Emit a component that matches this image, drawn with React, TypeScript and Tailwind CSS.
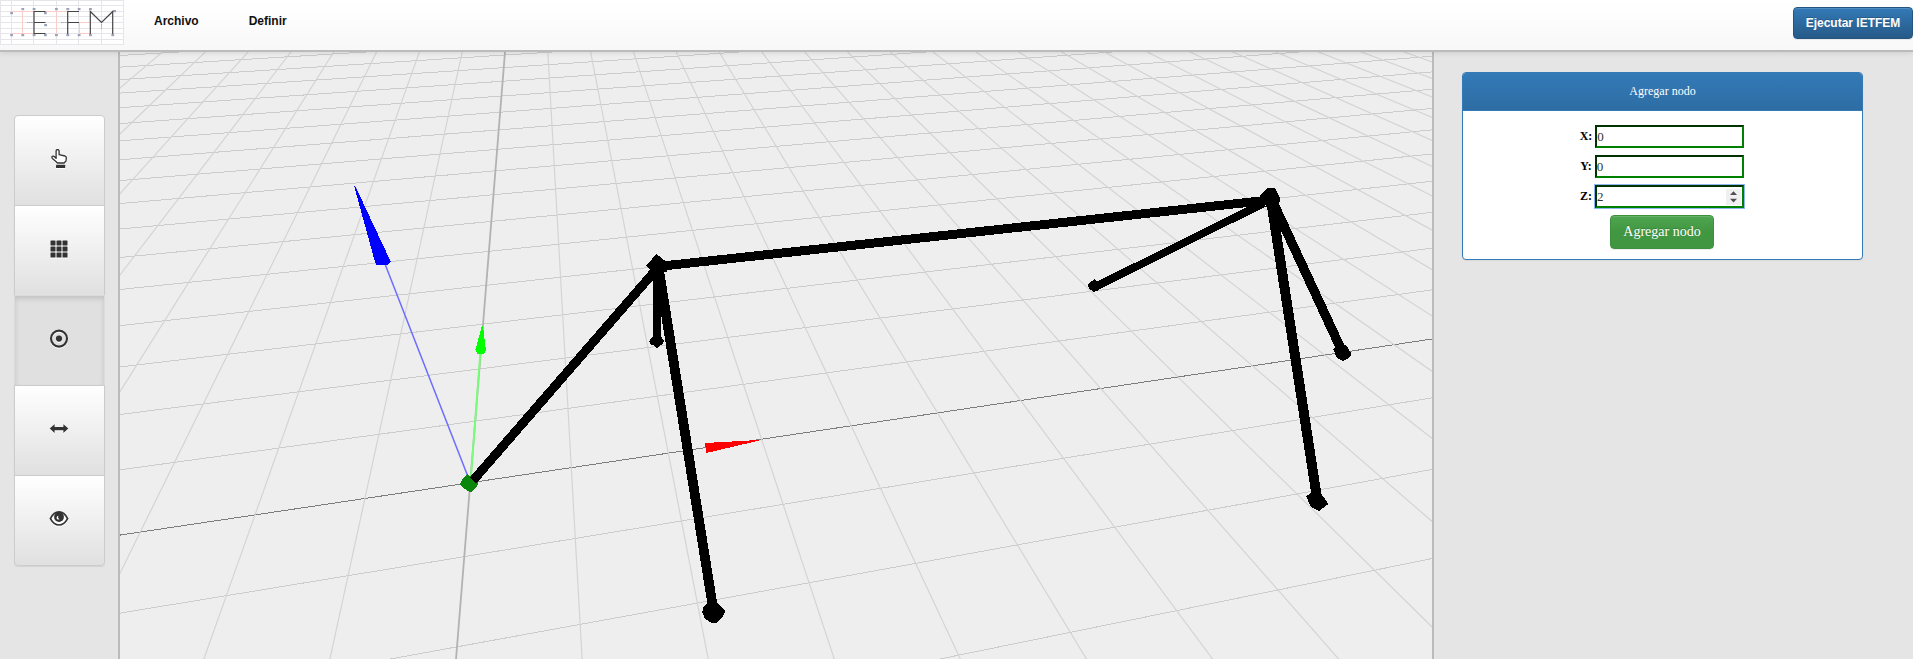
import type { ReactNode } from "react";

// Perspective of the ground grid: a level horizon and two vanishing points.
const HORIZON = -260.2;
const VX = 530.2;
const UX = 5442;

const depthX = (i: number, y: number) => VX + (y - HORIZON) * (-0.0807 + 0.13717 * i);

const depthLines = Array.from({ length: 35 }, (_, k) => k - 12);
const crossLines = Array.from({ length: 22 }, (_, k) => k - 4);

function DepthLine({ i }: { i: number }) {
  const axis = i === 0;
  return (
    <line
      x1={depthX(i, 40)}
      y1={40}
      x2={depthX(i, 670)}
      y2={670}
      stroke={axis ? "#b2b2b2" : "#d3d3d3"}
      strokeWidth={axis ? 1.8 : 1.15}
    />
  );
}

function CrossLine({ j }: { j: number }) {
  const y0 = HORIZON + 1 / (0.001346 + 0.00012175 * j);
  const x0 = depthX(0, y0);
  const slope = (HORIZON - y0) / (UX - x0);
  return (
    <line
      x1={100}
      y1={y0 + slope * (100 - x0)}
      x2={1450}
      y2={y0 + slope * (1450 - x0)}
      stroke={j === 0 ? "#7d7d7d" : "#cccccc"}
      strokeWidth={1}
      shapeRendering="crispEdges"
    />
  );
}

function Scene() {
  return (
    <svg className="block h-[607px] w-[1312px]" viewBox="120 52 1312 607">
      <g>
        {crossLines.map((j) => (
          <CrossLine key={j} j={j} />
        ))}
        {depthLines.map((i) => (
          <DepthLine key={i} i={i} />
        ))}
      </g>
      <line x1="385" y1="264" x2="468.5" y2="478" stroke="#6c6cff" strokeWidth="1.5" />
      <line x1="480.4" y1="352" x2="471" y2="476" stroke="#74ff74" strokeWidth="1.9" />
      <line x1="355.2" y1="187" x2="360" y2="199" stroke="#3030ff" strokeWidth="1.2" />
      <g shapeRendering="crispEdges">
        <polygon points="354,185.5 355,185.5 390.7,261.5 388,264.5 382.7,265.5 376,264.5 375,262" fill="#0000ff" />
        <polygon points="482,325.5 483,325.5 485.8,350 484,353.5 478,354.3 475.3,350" fill="#00ff00" />
        <polygon points="705,443 759,440 759,440.6 706.3,453" fill="#ff0000" />
        <polygon points="467.3,474.3 478.7,481.7 476.7,487.3 470.7,492.3 463.3,488.3 460,484.3 462.7,478.3" fill="#0a870a" />
        <g stroke="#000" fill="none">
          <line x1="473" y1="480.5" x2="657.5" y2="268" strokeWidth="9" />
          <line x1="656" y1="266.7" x2="1270" y2="200" strokeWidth="9" />
          <line x1="657.3" y1="268" x2="657" y2="340" strokeWidth="8" />
          <line x1="658.6" y1="268" x2="713" y2="608" strokeWidth="9.8" />
          <line x1="1264" y1="203" x2="1096" y2="286.5" strokeWidth="7.8" />
          <line x1="1271" y1="200" x2="1317" y2="498" strokeWidth="10" />
          <line x1="1272" y1="200" x2="1341.5" y2="350" strokeWidth="9.4" />
        </g>
        <g fill="#000">
          <polygon points="656.3,254 668,263 667,272 652,272 646,266" />
          <polygon points="649.3,341.3 652,337 655,335.5 661,336.5 664.3,341 662,344.5 659,346 657,348.5 655,346 651,344.5" />
          <polygon points="702.3,612.3 703,608 706.7,603.5 716.7,602.3 724.7,610 724.5,613 721.7,618.3 716,623 712,623 705,619" />
          <polygon points="1267.3,188.3 1275.3,188.3 1280.7,200 1277.3,206 1267.3,207.7 1259.3,196" />
          <polygon points="1087.7,285.5 1090.5,282 1095,279 1102.3,286.7 1099,290 1094,292 1090,289.5" />
          <polygon points="1306,496 1311.7,492.7 1321.7,494.3 1328.3,504 1319,511 1310.7,506.7" />
          <polygon points="1333.5,349.5 1338,344.5 1346,345 1351.5,354 1349,358 1343,361 1336.5,357.5" />
        </g>
      </g>
    </svg>
  );
}

function Logo() {
  const nodes = [
    [11.5, 13], [22.7, 9], [34, 9], [45.3, 13], [56.3, 9], [67.7, 9], [79, 9], [90.3, 9], [114.5, 11],
    [11.5, 35], [22.7, 35], [34, 35], [45.3, 35], [56.3, 35], [67.7, 35], [79, 35], [90.3, 35], [112.7, 35],
    [45.5, 25],
  ];
  return (
    <svg className="block h-[45px] w-[124px]" viewBox="0 0 124 45">
      <rect width="124" height="45" fill="#fff" />
      <g stroke="#e6e6ea" strokeWidth="1">
        {[0.5, 11.5, 33.5, 56.5, 78.5, 101.5, 123.5].map((x) => (
          <line key={x} x1={x} y1="0" x2={x} y2="45" />
        ))}
        {[0.5, 5.5, 11.5, 16.5, 22.5, 28.5, 33.5, 39.5, 44.5].map((y) => (
          <line key={y} x1="0" y1={y} x2="124" y2={y} />
        ))}
      </g>
      <path d="M11 11.5H34M22.5 11.5V33.5M11 33.5H34M45 11.5H67M56.5 11.5V33.5M79 22.5H90M79.5 22V33.5H90" fill="none" stroke="#fbccc8" />
      <g stroke="#a3a7b8" strokeWidth="1">
        <path d="M27 22.5H33M61 22.5H67M101.5 24V29" strokeDasharray="1.5 .6" />
      </g>
      {nodes.map(([x, y]) => (
        <rect key={`${x}-${y}`} x={x - 1.3} y={y - 1} width="2.8" height="2.2" fill="#9ba1b6" />
      ))}
      <path d="M45.5 11.5H34V33.5H45.5M34 22.5H45.5M79 11.5H67.7V34M67.7 22.5H79M90.3 34V11.5L101.5 22.5L112.7 11.5V34" fill="none" stroke="#444" strokeWidth="1.2" />
    </svg>
  );
}

function ToolButton({ children, active = false, label }: { children: ReactNode; active?: boolean; label: string }) {
  return (
    <button
      aria-label={label}
      className={
        active
          ? "-mt-px flex h-[91px] w-[91px] items-center justify-center border border-[#dbdbdb] bg-[#e0e0e0] pr-px pb-[3px] shadow-[inset_0_3px_5px_rgba(0,0,0,0.125)]"
          : "-mt-px flex h-[91px] w-[91px] items-center justify-center border border-[#ccc] bg-linear-to-b from-white to-[#e0e0e0] pr-px pb-[3px] shadow-[0_1px_1px_rgba(0,0,0,0.075)] first:mt-0 first:rounded-t last:rounded-b"
      }
    >
      {children}
    </button>
  );
}

const iconClass = "block size-5 drop-shadow-[0_1px_0_#fff]";

function Toolbar() {
  return (
    <aside className="w-[118px] shrink-0 bg-[#e5e5e5] pt-[63px] pl-[14px]">
      <div className="flex flex-col">
        <ToolButton label="Seleccionar">
          <svg className={iconClass} viewBox="0 0 20 20">
            <path d="M7.2 12.7L3.4 9.5C2.6 8.7 2.7 7.8 3.4 7.3C4.1 6.9 4.9 7.2 5.5 7.8L7.1 9.4V1.9C7.1 .1 10.1 .1 10.1 1.9V5.7L16 7C17 7.3 17.4 8 17.3 8.9L17 12L15.1 14H8.4Z" fill="#fff" stroke="#333" strokeWidth="1.3" strokeLinejoin="round" />
            <rect x="7" y="15.8" width="9.2" height="3.2" rx=".5" fill="#333" />
          </svg>
        </ToolButton>
        <ToolButton label="Grilla">
          <svg className={iconClass} viewBox="0 0 20 20" fill="#333">
            {[1, 7, 13].map((y) => [1, 7, 13].map((x) => <rect key={`${x}${y}`} x={x + 0.5} y={y + 0.5} width="5" height="5" rx=".6" />))}
          </svg>
        </ToolButton>
        <ToolButton label="Nodo" active>
          <svg className={iconClass} viewBox="0 0 20 20">
            <circle cx="10" cy="9.6" r="8" fill="none" stroke="#333" strokeWidth="2.1" />
            <circle cx="10" cy="9.6" r="3.1" fill="#333" />
          </svg>
        </ToolButton>
        <ToolButton label="Barra">
          <svg className={iconClass} viewBox="0 0 20 20">
            <path d="M.7 9.6L5.6 5.2V8H14.4V5.2L19.3 9.6L14.4 14V11.2H5.6V14Z" fill="#333" />
          </svg>
        </ToolButton>
        <ToolButton label="Ver">
          <svg className={iconClass} viewBox="0 0 20 20">
            <path d="M1.4 9.6C3.6 5.2 6.6 2.9 10 2.9S16.4 5.2 18.6 9.6C16.4 13.6 13.4 16 10 16S3.6 13.6 1.4 9.6Z" fill="#fff" stroke="#333" strokeWidth="1.7" />
            <circle cx="10" cy="8" r="4.9" fill="#333" />
            <path d="M9.4 6.8C8 7 7.4 8.2 7.7 9.4C8.1 10.5 9.4 10.9 10.4 10.2C9.2 9.5 8.8 8.2 9.4 6.8Z" fill="#fff" />
          </svg>
        </ToolButton>
      </div>
    </aside>
  );
}

function Field({ label, value, focused = false }: { label: string; value: string; focused?: boolean }) {
  return (
    <div className="flex h-[23px] items-center justify-center">
      <span className="pb-px text-[12px] font-bold text-black">{label}:</span>
      <span
        className={
          focused
            ? "ml-[3px] flex h-[23px] w-[149px] items-center border-2 border-t-[#003300] border-r-[#008000] border-b-[#008000] border-l-[#003300] bg-white text-[13px] leading-none text-[#333] shadow-[0_0_0_1px_#8db8f2]"
            : "ml-[3px] flex h-[23px] w-[149px] items-center border-2 border-t-[#003300] border-r-[#008000] border-b-[#008000] border-l-[#003300] bg-white text-[13px] leading-none text-[#333]"
        }
      >
        <span className="grow pb-px">{value}</span>
        {focused && (
          <span className="mr-px flex h-4 w-[15px] items-center justify-center bg-[#f0f0f0]">
            <svg className="block h-3 w-[7px]" viewBox="0 0 7 12" fill="#505050">
              <path d="M0 4L3.5 .3L7 4ZM0 7.8H7L3.5 11.5Z" />
            </svg>
          </span>
        )}
      </span>
    </div>
  );
}

export default function App() {
  return (
    <div className="flex h-[659px] w-[1913px] flex-col overflow-hidden bg-[#e5e5e5] font-['Liberation_Sans',sans-serif]">
      <header className="relative z-10 flex h-[52px] shrink-0 items-start border-b-2 border-[#bbb] bg-linear-to-b from-white to-[#f8f8f8] shadow-[0_1px_5px_rgba(0,0,0,0.1)]">
        <Logo />
        <nav className="flex gap-[50px] pt-[13px] pl-[30px] text-[12px] leading-4 font-bold text-[#111]">
          <span>Archivo</span>
          <span>Definir</span>
        </nav>
        <button className="mt-[7px] ml-auto h-8 w-[120px] rounded border border-[#245580] bg-linear-to-b from-[#337ab7] to-[#265a88] text-[12px] leading-4 font-bold text-white shadow-[inset_0_1px_0_rgba(255,255,255,0.15),0_1px_1px_rgba(0,0,0,0.075)] [text-shadow:0_-1px_0_rgba(0,0,0,0.2)]">
          Ejecutar IETFEM
        </button>
      </header>
      <div className="flex grow">
        <Toolbar />
        <main className="w-[1316px] shrink-0 border-x-2 border-[#bbb] bg-[#eee]">
          <Scene />
        </main>
        <aside className="grow pt-5 pl-7 font-['Liberation_Serif',serif]">
          <section className="flex h-[188px] w-[401px] flex-col overflow-hidden rounded border border-[#337ab7] bg-white shadow-[0_1px_2px_rgba(0,0,0,0.05)]">
            <h2 className="flex h-[38px] shrink-0 items-center justify-center border-b border-[#337ab7] bg-linear-to-b from-[#337ab7] to-[#2e6da4] pb-0.5 text-[12px] leading-4 text-white">
              Agregar nodo
            </h2>
            <div className="flex flex-col items-center gap-[7px] pt-[14px] pr-px">
              <Field label="X" value="0" />
              <Field label="Y" value="0" />
              <Field label="Z" value="2" focused />
              <button className="h-[34px] w-[104px] rounded border border-[#3e8f3e] bg-linear-to-b from-[#50a650] to-[#419641] to-50% pb-0.5 text-[14px] text-white shadow-[inset_0_1px_0_rgba(255,255,255,0.15),0_1px_1px_rgba(0,0,0,0.075)] [text-shadow:0_-1px_0_rgba(0,0,0,0.2)]">
                Agregar nodo
              </button>
            </div>
          </section>
        </aside>
      </div>
    </div>
  );
}
